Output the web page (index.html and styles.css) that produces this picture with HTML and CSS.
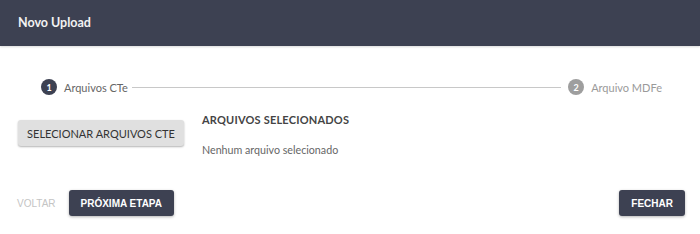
FILE: index.html
```html
<!DOCTYPE html>
<html lang="pt-BR">
<head>
    <meta charset="UTF-8">
    <meta name="viewport" content="width=device-width, initial-scale=1.0">
    <title>Novo Upload</title>
    <link rel="stylesheet" href="styles.css">
</head>
<body>
    <div class="modal">
        <div class="modal-header">
            <h2>Novo Upload</h2>
        </div>

        <div class="modal-body">
            <div class="stepper">
                <div class="step active">
                    <span class="step-num">1</span>
                    <span class="step-label">Arquivos CTe</span>
                </div>
                <div class="step-line"></div>
                <div class="step">
                    <span class="step-num">2</span>
                    <span class="step-label">Arquivo MDFe</span>
                </div>
            </div>

            <div class="upload-row">
                <button class="btn-select">SELECIONAR ARQUIVOS CTE</button>
                <div class="selected">
                    <h3>ARQUIVOS SELECIONADOS</h3>
                    <p>Nenhum arquivo selecionado</p>
                </div>
            </div>
        </div>

        <div class="modal-footer">
            <div class="footer-left">
                <button class="btn-text" disabled>VOLTAR</button>
                <button class="btn-dark">PRÓXIMA ETAPA</button>
            </div>
            <button class="btn-dark">FECHAR</button>
        </div>
    </div>
</body>
</html>
```

FILE: styles.css
```css
body {
    margin: 0;
    padding: 0;
    background-color: #fff;
    font-family: 'Lato', 'Noto Sans', sans-serif;
    color: #444;
}

.modal {
    width: 700px;
    height: 234px;
    display: flex;
    flex-direction: column;
    background-color: #fff;
}

.modal-header {
    background-color: #3d4152;
    height: 46px;
    display: flex;
    align-items: center;
    padding: 0 18px;
    box-shadow: 0 1px 2px rgba(0, 0, 0, 0.15);
}

.modal-header h2 {
    margin: 0;
    margin-top: -1px;
    font-size: 12.5px;
    font-weight: 700;
    color: #f2f2f2;
}

.modal-body {
    padding: 33px 18px 0 41px;
}

.stepper {
    display: flex;
    align-items: center;
    height: 16px;
    padding-right: 20px;
}

.step {
    display: flex;
    align-items: center;
}

.step-num {
    width: 16px;
    height: 16px;
    border-radius: 50%;
    background-color: #9e9e9e;
    color: #fff;
    font-size: 9px;
    font-weight: 700;
    display: flex;
    align-items: center;
    justify-content: center;
    margin-right: 7px;
}

.step.active .step-num {
    background-color: #3d4152;
}

.step-label {
    font-size: 11px;
    color: #9a9a9a;
}

.step.active .step-label {
    color: #666;
}

.step-line {
    flex: 1;
    height: 1px;
    background-color: #c8c8c8;
    margin: 0 7px 0 4px;
}

.upload-row {
    display: flex;
    margin-top: 11px;
    margin-left: -23px;
}

.btn-select {
    background-color: #e0e0e0;
    color: #333;
    border: none;
    border-radius: 3px;
    height: 26px;
    width: 166px;
    padding: 0;
    font-family: 'Lato', 'Noto Sans', sans-serif;
    font-size: 11px;
    box-shadow: 0 1px 2px rgba(0, 0, 0, 0.3);
    margin-top: 14px;
    cursor: pointer;
}

.selected {
    margin-left: 18px;
}

.selected h3 {
    margin: 7px 0 0;
    font-size: 11px;
    font-weight: 700;
    color: #444;
    letter-spacing: 0.2px;
}

.selected p {
    margin: 17px 0 0;
    font-size: 10.7px;
    color: #666;
}

.modal-footer {
    margin-top: auto;
    padding: 0 15px 18px 17px;
    display: flex;
    justify-content: space-between;
    align-items: center;
}

.footer-left {
    display: flex;
    align-items: center;
}

.btn-text {
    background: none;
    border: none;
    padding: 0;
    font-family: 'Liberation Sans', Arial, sans-serif;
    font-size: 10px;
    color: #c4c4c4;
    margin-right: 13px;
}

.btn-dark {
    background-color: #3d4152;
    color: #fff;
    border: none;
    border-radius: 3px;
    height: 26px;
    padding: 0 12px;
    font-family: 'Liberation Sans', Arial, sans-serif;
    font-size: 10px;
    font-weight: 700;
    box-shadow: 0 1px 3px rgba(0, 0, 0, 0.3);
    cursor: pointer;
}
```
